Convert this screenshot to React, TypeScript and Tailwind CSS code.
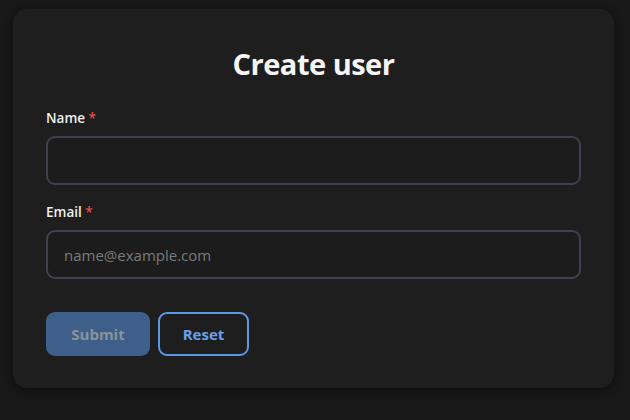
import React from 'react';

const App: React.FC = () => {
  return (
    <div
      className="min-h-screen w-full bg-[#181818] px-[13px] pt-[9px] pb-[32px]"
      style={{ fontFamily: '"Open Sans", "Noto Sans", sans-serif' }}
    >
      <div className="w-[601px] rounded-[14px] bg-[#1e1e1e] px-[33px] pt-[35px] pb-[32px] shadow-[0_2px_8px_rgba(0,0,0,0.45)]">
        {/* Title */}
        <h1 className="mb-[24px] text-center text-[29px] font-bold leading-[40px] tracking-[-0.5px] text-[#f5f5f5]">
          Create user
        </h1>

        <form className="flex flex-col">
          {/* Name */}
          <label className="mb-[8px] text-[13.5px] font-semibold leading-[20px] text-[#f0f0f0]">
            Name <span className="text-[#e5484d]">*</span>
          </label>
          <input
            type="text"
            className="mb-[17px] h-[49px] w-full rounded-[9px] border-2 border-[#3d4151] bg-[#1c1c1c] px-[16px] text-[15px] text-[#e5e5e5] outline-none"
          />

          {/* Email */}
          <label className="mb-[8px] text-[13.5px] font-semibold leading-[20px] text-[#f0f0f0]">
            Email <span className="text-[#e5484d]">*</span>
          </label>
          <input
            type="email"
            placeholder="name@example.com"
            className="h-[49px] w-full rounded-[9px] border-2 border-[#3d4151] bg-[#1c1c1c] px-[16px] text-[15px] text-[#e5e5e5] outline-none placeholder:text-[#7a7a7a]"
          />

          {/* Actions */}
          <div className="mt-[33px] flex gap-[8px]">
            <button
              type="button"
              disabled
              className="h-[44px] w-[104px] rounded-[9px] bg-[#3e5f8a] text-[15px] font-bold text-[#8a929c]"
            >
              Submit
            </button>
            <button
              type="button"
              className="h-[44px] w-[91px] rounded-[9px] border-2 border-[#5d98e6] text-[15px] font-bold text-[#6aa2f0]"
            >
              Reset
            </button>
          </div>
        </form>
      </div>
    </div>
  );
};

export default App;
